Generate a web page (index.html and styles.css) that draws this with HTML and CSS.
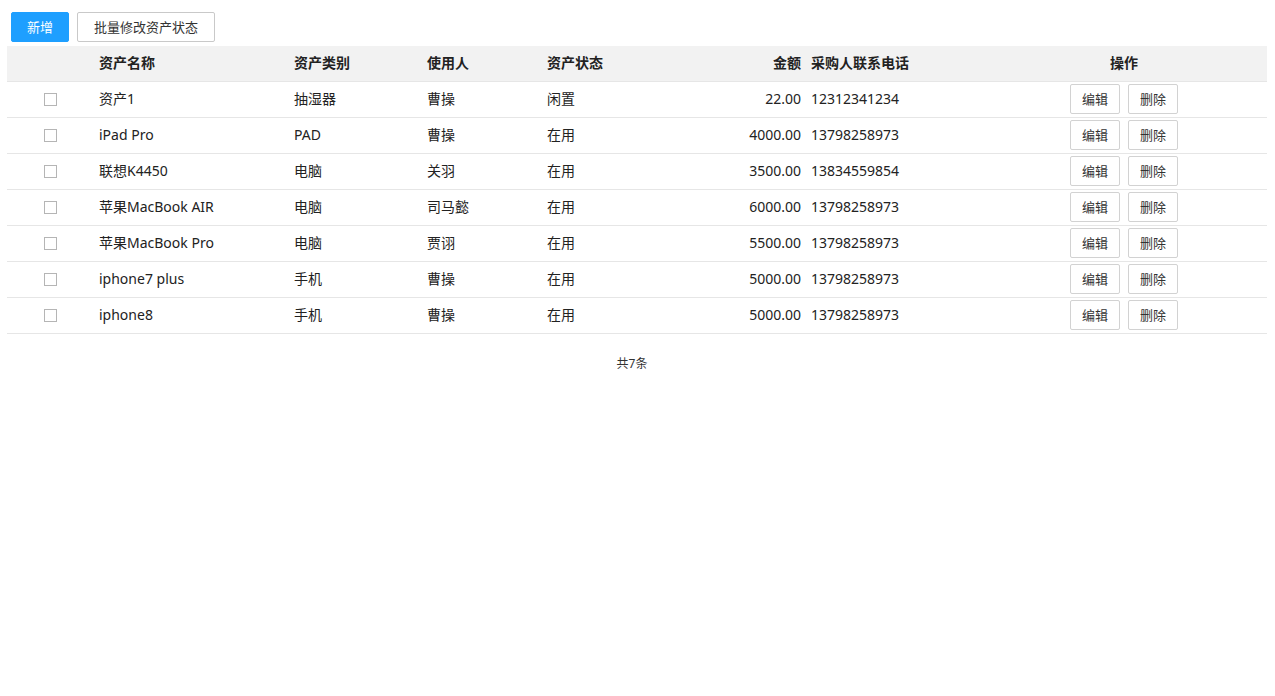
FILE: index.html
```html
<html>
	<head>
		<meta charset="utf-8" />
		<title>资产列表</title>
		<link rel="stylesheet" href="styles.css">
	</head>
	<body>
		<div class="toolbar">
			<button class="btn btn-blue">新增</button>
			<button class="btn btn-plain">批量修改资产状态</button>
		</div>
		<table class="grid">
			<colgroup>
				<col style="width:84px">
				<col style="width:195px">
				<col style="width:133px">
				<col style="width:120px">
				<col style="width:120px">
				<col style="width:144px">
				<col style="width:178px">
				<col>
			</colgroup>
			<thead>
				<tr>
					<th></th>
					<th>资产名称</th>
					<th>资产类别</th>
					<th>使用人</th>
					<th>资产状态</th>
					<th class="num">金额</th>
					<th>采购人联系电话</th>
					<th class="ops">操作</th>
				</tr>
			</thead>
			<tbody>
				<tr>
					<td class="chk"><span class="box"></span></td>
					<td>资产1</td><td>抽湿器</td><td>曹操</td><td>闲置</td>
					<td class="num">22.00</td><td>12312341234</td>
					<td class="ops"><button class="btn btn-sm">编辑</button><button class="btn btn-sm">删除</button></td>
				</tr>
				<tr>
					<td class="chk"><span class="box"></span></td>
					<td>iPad Pro</td><td>PAD</td><td>曹操</td><td>在用</td>
					<td class="num">4000.00</td><td>13798258973</td>
					<td class="ops"><button class="btn btn-sm">编辑</button><button class="btn btn-sm">删除</button></td>
				</tr>
				<tr>
					<td class="chk"><span class="box"></span></td>
					<td>联想K4450</td><td>电脑</td><td>关羽</td><td>在用</td>
					<td class="num">3500.00</td><td>13834559854</td>
					<td class="ops"><button class="btn btn-sm">编辑</button><button class="btn btn-sm">删除</button></td>
				</tr>
				<tr>
					<td class="chk"><span class="box"></span></td>
					<td>苹果MacBook AIR</td><td>电脑</td><td>司马懿</td><td>在用</td>
					<td class="num">6000.00</td><td>13798258973</td>
					<td class="ops"><button class="btn btn-sm">编辑</button><button class="btn btn-sm">删除</button></td>
				</tr>
				<tr>
					<td class="chk"><span class="box"></span></td>
					<td>苹果MacBook Pro</td><td>电脑</td><td>贾诩</td><td>在用</td>
					<td class="num">5500.00</td><td>13798258973</td>
					<td class="ops"><button class="btn btn-sm">编辑</button><button class="btn btn-sm">删除</button></td>
				</tr>
				<tr>
					<td class="chk"><span class="box"></span></td>
					<td>iphone7 plus</td><td>手机</td><td>曹操</td><td>在用</td>
					<td class="num">5000.00</td><td>13798258973</td>
					<td class="ops"><button class="btn btn-sm">编辑</button><button class="btn btn-sm">删除</button></td>
				</tr>
				<tr>
					<td class="chk"><span class="box"></span></td>
					<td>iphone8</td><td>手机</td><td>曹操</td><td>在用</td>
					<td class="num">5000.00</td><td>13798258973</td>
					<td class="ops"><button class="btn btn-sm">编辑</button><button class="btn btn-sm">删除</button></td>
				</tr>
			</tbody>
		</table>
		<div class="pager">共7条</div>
	</body>
</html>
```

FILE: styles.css
```css
body{
	margin: 0;
	padding: 12px 8px 0 7px;
	font-family: "Segoe UI", "Noto Sans", "Noto Sans CJK SC", sans-serif;
	font-size: 14px;
	color: #333;
	background: #fff;
}
.toolbar{
	display: flex;
	gap: 8px;
	padding-left: 4px;
	margin-bottom: 4px;
}
.btn{
	height: 30px;
	padding: 0 12px;
	border-radius: 2px;
	font-family: inherit;
	font-size: 13px;
	line-height: 28px;
	cursor: pointer;
}
.btn-blue{
	width: 58px;
	background: #1E9FFF;
	border: 1px solid #1E9FFF;
	color: #fff;
}
.btn-plain{
	width: 138px;
	background: #fff;
	border: 1px solid #c9c9c9;
	color: #333;
}
.btn-sm{
	width: 50px;
	padding: 0;
	background: #fff;
	border: 1px solid #d2d2d2;
	color: #333;
	margin: 0 4px;
	vertical-align: middle;
}
.grid{
	width: 1260px;
	border-collapse: collapse;
	table-layout: fixed;
}
.grid th,.grid td{
	height: 36px;
	padding: 0 8px;
	line-height: 20px;
	text-align: left;
	vertical-align: middle;
	white-space: nowrap;
	border-bottom: 1px solid #e6e6e6;
	box-sizing: border-box;
}
.grid th{
	height: 35px;
	background: #f2f2f2;
	font-weight: bold;
	font-size: 14px;
	color: #222;
}
.grid td{
	font-size: 14px;
	color: #222;
}
.grid .num{
	text-align: right;
	padding-right: 2px;
}
.grid .ops{
	text-align: center;
}
.grid td.ops{
	padding: 0;
}
.grid .chk{
	padding: 0;
}
.box{
	display: block;
	width: 11px;
	height: 11px;
	border: 1px solid #b5b5b5;
	margin: 0 0 0 37px;
}
.pager{
	padding-top: 20px;
	padding-right: 10px;
	text-align: center;
	font-size: 12px;
}
```
